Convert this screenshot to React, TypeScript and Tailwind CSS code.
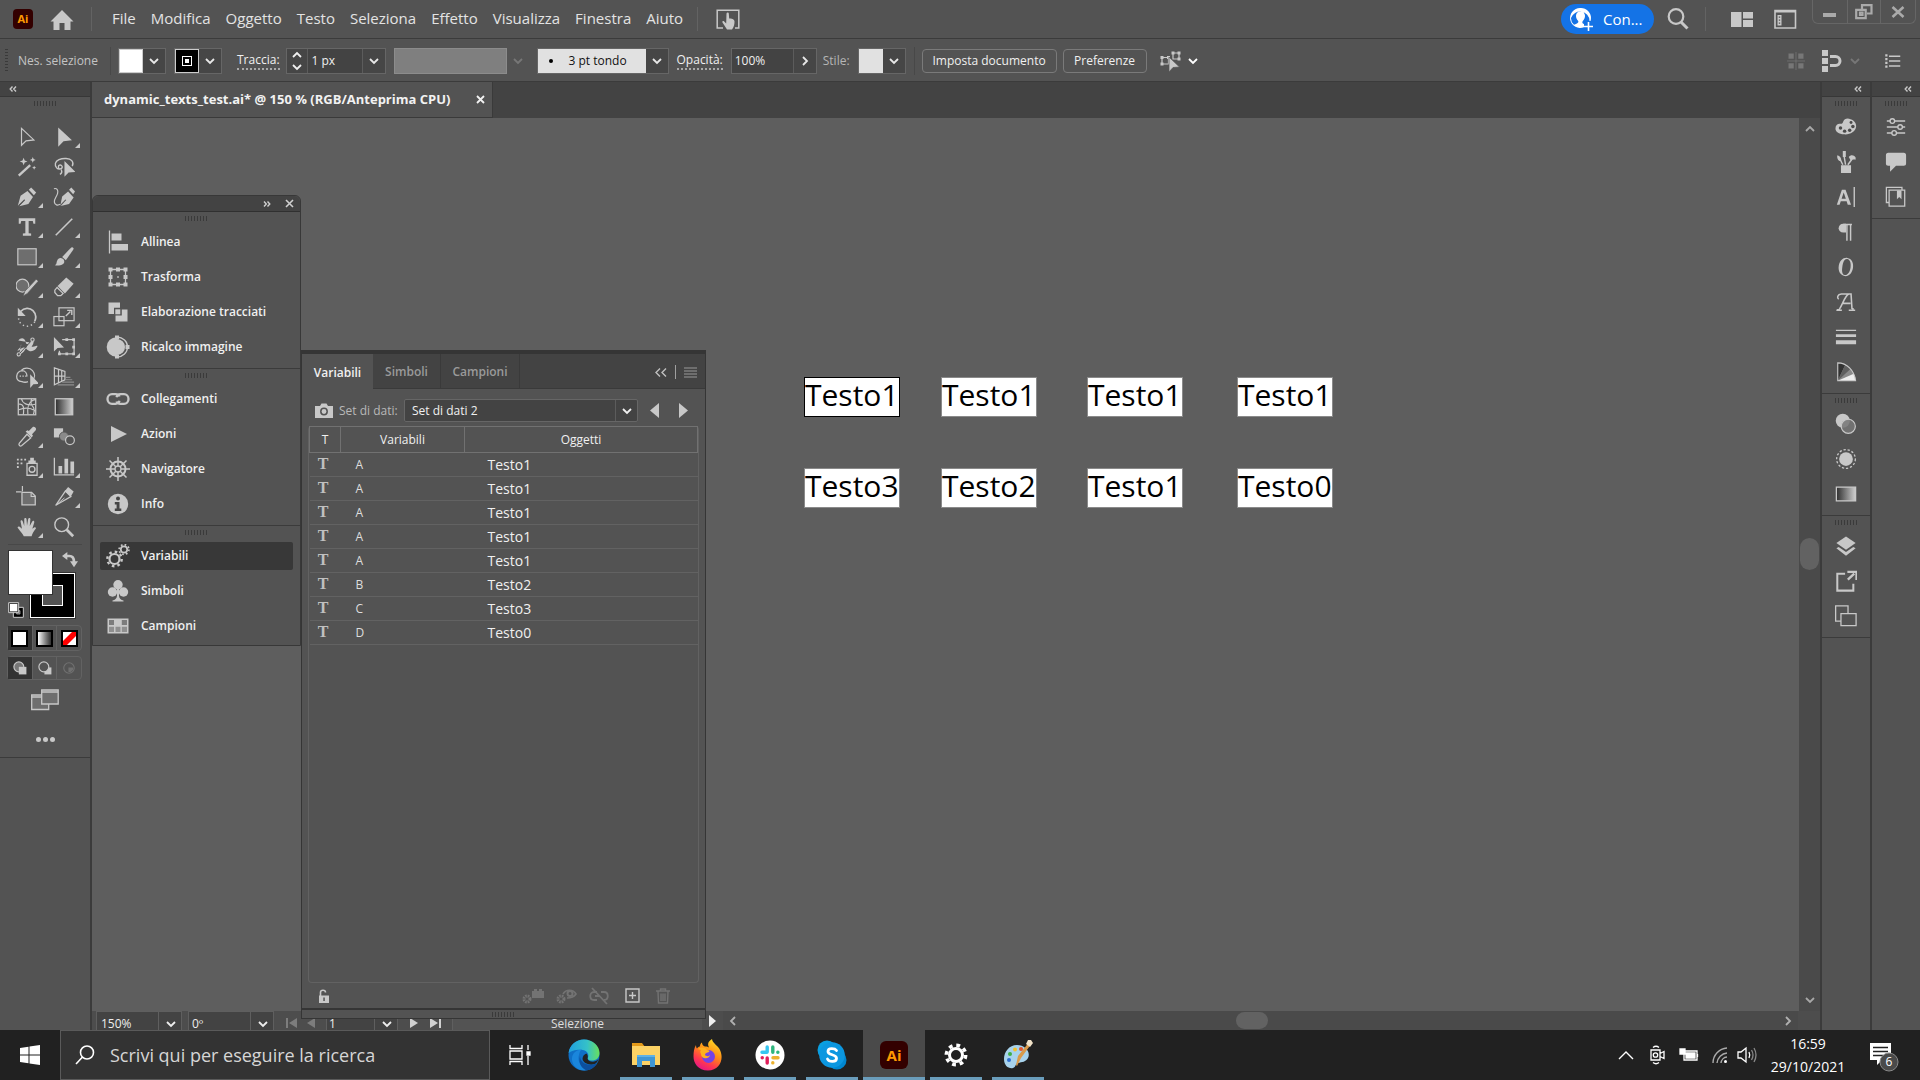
import React, { useState } from "react";
import clsx from "clsx";

interface IconProps {
  size?: number;
  children: React.ReactNode;
}

interface Tool {
  name: string;
  flyout?: boolean;
  icon: React.ReactNode;
}

interface PanelItem {
  name: string;
  icon: React.ReactNode;
}

// every icon is drawn on a 24 unit grid
const Icon: React.FC<IconProps> = ({ size = 24, children }) => (
  <svg
    width={size}
    height={size}
    viewBox="0 0 24 24"
    fill="none"
    className="shrink-0"
    aria-hidden="true"
  >
    {children}
  </svg>
);

const c = "currentColor";

const Chevron: React.FC<{ dir?: "down" | "right" | "up" | "left" }> = ({
  dir = "down",
}) => {
  const paths = {
    down: "M2 4l4 4 4-4",
    up: "M2 8l4-4 4 4",
    right: "M4 2l4 4-4 4",
    left: "M8 2L4 6l4 4",
  };
  return (
    <svg width="12" height="12" viewBox="0 0 12 12" className="shrink-0" aria-hidden="true">
      <path d={paths[dir]} fill="none" stroke={c} strokeWidth="1.8" />
    </svg>
  );
};

const DoubleArrow: React.FC<{ right?: boolean }> = ({ right }) => (
  <svg width="8" height="6" viewBox="0 0 8 6" aria-hidden="true">
    <path
      d={right ? "M1 .5L3.300 3 1 5.500M4.500.5L6.800 3 4.500 5.500" : "M3.500.5L1.200 3l2.300 2.500M7 .5L4.700 3 7 5.500"}
      fill="none"
      stroke={c}
      strokeWidth="1.4"
    />
  </svg>
);

const Grip: React.FC = () => (
  <div className="mx-auto h-[5px] w-[23px] bg-[repeating-linear-gradient(90deg,#3a3a3a_0_1px,transparent_1px_3px)]" />
);

const tools: Tool[] = [
  {
    name: "Selezione",
    icon: <path d="M6 2.500v18.500l5-4.800 8.500-1z" stroke={c} strokeWidth="1.3" />,
  },
  {
    name: "Selezione diretta",
    flyout: true,
    icon: <path d="M5.700 1.500v21l5.800-5.800 9.200-1.200z" fill={c} />,
  },
  {
    name: "Bacchetta magica",
    icon: (
      <>
        <path d="M3 21.500L15.500 10" stroke={c} strokeWidth="2.600" />
        <path
          d="M8.300 2l1.200 2.800L12.500 6l-3 1.200L8.300 10 7.100 7.200 4 6l3.100-1.200zM18.300 1.200l.9 2.200 2.300.9-2.300.9-.9 2.200-.9-2.200-2.200-.9 2.200-.9zM19.800 10.500l.7 1.500 1.500.7-1.500.7-.7 1.500-.7-1.500-1.500-.7 1.500-.7z"
          fill={c}
        />
      </>
    ),
  },
  {
    name: "Lazo",
    icon: (
      <>
        <path
          d="M4 13C1.500 10 2 6 6.500 4S18 2.200 20.500 5c1.800 2 1.500 4 .5 6M4 13c2 1.800 5.500 1.500 6-.5S8.500 9.500 7 10s-1.500 3.500 0 4M9 15c1 2 .5 4-1.500 5"
          stroke={c}
          strokeWidth="1.500"
        />
        <path d="M12.500 5.500v17l4.500-4.500 7.500-.5z" fill={c} />
      </>
    ),
  },
  {
    name: "Penna",
    flyout: true,
    icon: (
      <>
        <path d="M2 21.500L5 10.500 12.500 5.500l6 6.500-5 7.500-10 2.500 6-6.500" fill={c} />
        <path d="M3 21.500l6.500-6.500" stroke="#535353" strokeWidth="1.200" />
        <path d="M14 4l2.500-2.500 5.500 5.500-2.500 3z" fill={c} />
      </>
    ),
  },
  {
    name: "Curvatura",
    icon: (
      <>
        <path d="M8 21.500l2-10 6.500-5.500 6 6.500-5 7-8 2" fill={c} />
        <path d="M8 21.500l6-6.500" stroke="#535353" strokeWidth="1.200" />
        <path d="M17.500 4L20 1.500l4 4.500-2 3z" fill={c} />
        <path d="M1 3c3-1 5 1 4 5s-4 6-3.500 9.500S5 21.500 8 20" stroke={c} strokeWidth="1.300" />
      </>
    ),
  },
  {
    name: "Testo",
    flyout: true,
    icon: (
      <path
        d="M3 2.500h18v6h-2l-.7-3h-4.500v13.200l2.700.5v2.300h-9v-2.300l2.700-.5V5.500H5.700L5 8.500H3z"
        fill={c}
      />
    ),
  },
  {
    name: "Segmento di linea",
    flyout: true,
    icon: <path d="M3 21L21 3" stroke={c} strokeWidth="1.800" />,
  },
  {
    name: "Rettangolo",
    flyout: true,
    icon: <rect x="2" y="3" width="20" height="17.500" fill="#6e6e6e" stroke={c} strokeWidth="1.300" />,
  },
  {
    name: "Pennello",
    flyout: true,
    icon: (
      <>
        <path d="M21.500 1.500c1.500.5 1 2-.2 3.700L14 15.500l-4-3.500 8.500-9c1-1 2-1.800 3-1.500z" fill={c} />
        <path d="M8.500 13.200c2.500.3 4 2 3.800 4.300-.3 3-5 4.500-10.300 3.500 2.500-1.300 1.500-3 2.500-5 .8-1.800 2.300-3 4-2.800z" fill={c} />
      </>
    ),
  },
  {
    name: "Shaper",
    flyout: true,
    icon: (
      <>
        <circle cx="7" cy="10.500" r="7" fill="#6e6e6e" stroke={c} strokeWidth="1.400" />
        <path d="M22 3.500l2.500 2-12 13.500-4.800 3 2-5.500z" fill={c} stroke="#535353" strokeWidth=".8" />
      </>
    ),
  },
  {
    name: "Gomma",
    flyout: true,
    icon: (
      <>
        <path d="M14.500 1.500l8 7L13 19l-8-8z" fill={c} />
        <path d="M4.500 12.500l6.500 6.500-2.500 2.500H5l-3-3.500v-2.500z" stroke={c} strokeWidth="1.400" />
      </>
    ),
  },
  {
    name: "Ruota",
    flyout: true,
    icon: (
      <>
        <path d="M5 6c4-4.500 10-4.500 13.500-1 3 3 4 7 2 11.500" stroke={c} strokeWidth="1.900" />
        <path d="M2 2v9h8.500z" fill={c} />
        <path d="M20.500 17c-3 5-9 6.500-13.500 3.500-3-2-4-4.500-4.200-7" stroke={c} strokeWidth="1.600" strokeDasharray="1.500 3" />
      </>
    ),
  },
  {
    name: "Scala",
    flyout: true,
    icon: (
      <>
        <rect x="6.500" y="2" width="16.500" height="14" stroke={c} strokeWidth="1.300" />
        <rect x="1" y="11.500" width="11" height="10" stroke={c} strokeWidth="1.300" />
        <path d="M14 11l5-5M15.500 4.800h5v5" stroke={c} strokeWidth="1.500" />
      </>
    ),
  },
  {
    name: "Larghezza",
    flyout: true,
    icon: (
      <>
        <path
          d="M2.500 5c3-4 7-3 8 1.500.5 3 2 3 5 .5M3.500 20C6 20 9 17 11 13s4.500-8 7-8.500c2 0 1.500 4-1 7 3 1 5-1.500 6.500-.5-1.500 4-6 7-9.500 5-3-1.800-3.500-4-6-3.500-3 1-3.500 3-6.500 3.500C3 13 6.500 12 5.500 9z"
          fill={c}
        />
        <circle cx="3" cy="20" r="1.800" fill="#535353" stroke={c} strokeWidth="1.200" />
        <path d="M4 19L17 5" stroke="#535353" strokeWidth="1" />
        <circle cx="18" cy="4" r="1.800" fill="#535353" stroke={c} strokeWidth="1.200" />
      </>
    ),
  },
  {
    name: "Trasformazione libera",
    flyout: true,
    icon: (
      <>
        <path d="M10 4h13v15.500H7V16" stroke={c} strokeWidth="1.400" />
        <path d="M21 2.500h3v3h-3zM21 10.500h3v3h-3zM21 18h3v3h-3zM13.500 18h3v3h-3zM5.500 18h3v3h-3zM13.500 2.500h3v3h-3z" fill={c} />
        <path d="M1 1v16l4-4 7-.5z" fill={c} />
      </>
    ),
  },
  {
    name: "Crea forme",
    flyout: true,
    icon: (
      <>
        <path
          d="M6 4.500C9 1.500 15 1.500 18 5s3 8-.5 11M13 17c-2 1-4 1-6.500 0C2 17 .5 14 .8 11S3 5.500 6.500 5c3.500 0 5.500 3 5.500 6.500"
          stroke={c}
          strokeWidth="1.400"
        />
        <path d="M4 11h9" stroke={c} strokeWidth="1.500" strokeDasharray="1.500 1.500" />
        <path d="M15.500 9v15l3.500-4 6.500-.5z" fill={c} />
      </>
    ),
  },
  {
    name: "Griglia prospettica",
    flyout: true,
    icon: (
      <>
        <path d="M1.500 2v18.500L13 15V6zM1.500 11H13M6 3.500V18M9.500 5v11.500" stroke={c} strokeWidth="1.300" />
        <path d="M14 12.500h5M14 15h7M10 17.500h13M5 20.500h18" stroke="#8d8d8d" strokeWidth="1.300" />
      </>
    ),
  },
  {
    name: "Trama",
    icon: (
      <>
        <rect x="2.500" y="3" width="19" height="17.500" stroke={c} strokeWidth="1.400" />
        <path
          d="M3 9c5-1 6 3 5 11.500M6 3c1 5 6 8 15 6M21 4c-6 1-9 7-8 16M3 15c5-2 11-3 18 1M17 3c-1 3-1 6 1 8s2 6 1 9"
          stroke={c}
          strokeWidth="1.300"
        />
      </>
    ),
  },
  {
    name: "Sfumatura",
    icon: (
      <>
        <defs>
          <linearGradient id="toolGradient">
            <stop offset="0" stopColor="#2d2d2d" />
            <stop offset="1" stopColor="#d0d0d0" />
          </linearGradient>
        </defs>
        <rect x="2.500" y="3" width="19" height="17.500" fill="url(#toolGradient)" stroke={c} strokeWidth="1.400" />
      </>
    ),
  },
  {
    name: "Contagocce",
    flyout: true,
    icon: (
      <>
        <path d="M12 9l4 4L6 21.500c-1.500 1-3.500-.5-2.500-2.500z" stroke={c} strokeWidth="1.400" />
        <path d="M10.500 6l2-1.500 1.500 1 4-4.200c2-1.500 5 1.200 3.500 3.200l-4 4.500 1 1.500-1.500 2z" fill={c} />
      </>
    ),
  },
  {
    name: "Fusione",
    icon: (
      <>
        <path d="M1 2.500h10v10H1z" fill={c} />
        <circle cx="12" cy="11.500" r="5" fill="#8a8a8a" stroke="#535353" />
        <circle cx="18.500" cy="15.500" r="4.800" fill="#535353" stroke={c} strokeWidth="1.300" />
      </>
    ),
  },
  {
    name: "Bomboletta simboli",
    flyout: true,
    icon: (
      <>
        <path d="M12 8h11v13H12z" stroke={c} strokeWidth="1.400" />
        <path d="M13.500 5h8v3h-8zM15.500 2h4v3h-4z" fill={c} />
        <circle cx="17.500" cy="14.500" r="3.200" stroke={c} strokeWidth="1.500" />
        <path d="M1 3h2v2H1zM5 3h2v2H5zM9 3h2v2H9zM1 7h2v2H1zM5 7h2v2H5zM1 11h2v2H1z" fill={c} />
      </>
    ),
  },
  {
    name: "Grafico",
    flyout: true,
    icon: (
      <>
        <path d="M1.500 2v18.500H23" stroke={c} strokeWidth="1.400" />
        <path d="M6 11h4v8H6zM12.500 3h4v16h-4zM19 6h4v13h-4z" fill={c} />
      </>
    ),
  },
  {
    name: "Tavola da disegno",
    icon: (
      <>
        <path d="M0 6.500h6M7 0v6" stroke={c} strokeWidth="1.300" />
        <path d="M6.500 7H17l4 4v9.500H6.500z" fill="#6e6e6e" stroke={c} strokeWidth="1.400" />
        <path d="M16.500 7v4.500H21" stroke={c} strokeWidth="1.200" />
      </>
    ),
  },
  {
    name: "Taglierina",
    flyout: true,
    icon: (
      <>
        <path d="M3 21L13.500 5.500l6 6z" stroke={c} strokeWidth="1.400" />
        <path d="M13 5.500L16.500 1l6 5-3 5.500z" fill={c} />
        <path d="M3 21l9.500-8" stroke={c} />
      </>
    ),
  },
  {
    name: "Mano",
    flyout: true,
    icon: (
      <path
        d="M8.500 22C7 19 5 17 2 13c-.8-1.200.8-2.300 2-1.200L6.500 14 5 6c-.2-1.600 1.800-2 2.300-.4L9 11V3.500c0-1.700 2.300-1.700 2.500 0l.5 7 1.300-7.200c.3-1.500 2.500-1.300 2.400.3L15 11l2.700-5c.8-1.400 2.600-.6 2.200 1L17.800 14l2-1.500c1.300-.8 2.600.3 1.700 1.500C19 17 18 19.500 17 22z"
        fill={c}
      />
    ),
  },
  {
    name: "Zoom",
    icon: (
      <>
        <circle cx="9.500" cy="9.500" r="7.500" stroke={c} strokeWidth="1.500" />
        <path d="M15 15l7 7" stroke={c} strokeWidth="3" />
      </>
    ),
  },
];

const panelGroups: PanelItem[][] = [
  [
    {
      name: "Allinea",
      icon: (
        <>
          <path d="M3.500.5v23" stroke={c} strokeWidth="1.300" />
          <path d="M5.500 3.500h10v7h-10zM5.500 14h16.500v6.500H5.500z" fill={c} />
        </>
      ),
    },
    {
      name: "Trasforma",
      icon: (
        <>
          <path d="M4.500 4.500h15v15h-15z" stroke={c} strokeWidth="1.300" />
          <path
            d="M2.500 2.500h4v4h-4zM10 2.500h4v4h-4zM17.500 2.500h4v4h-4zM2.500 10h4v4h-4zM17.500 10h4v4h-4zM2.500 17.500h4v4h-4zM10 17.500h4v4h-4zM17.500 17.500h4v4h-4zM11.200 11.200h1.600v1.600h-1.600z"
            fill={c}
          />
        </>
      ),
    },
    {
      name: "Elaborazione tracciati",
      icon: (
        <>
          <path d="M2.500 2.500H14v5.300H8V14H2.500z" fill={c} />
          <path d="M15.800 9.500H21.500V21.500H9.500v-6h6.300z" fill={c} />
          <path d="M9.300 9.300h5v5h-5z" fill={c} />
        </>
      ),
    },
    {
      name: "Ricalco immagine",
      icon: (
        <>
          <circle cx="10.500" cy="12" r="9.800" fill={c} />
          <path d="M11 2c6 .3 10 4.500 10 10s-4 9.700-10 10" stroke="#535353" strokeWidth="4" />
          <path d="M11 2c6 .3 10.500 4.500 10.500 10S17 21.700 11 22" stroke={c} strokeWidth="1.300" />
          <path d="M9 .5h4v4H9zM9 19.500h4v4H9zM19.500 10h4v4h-4z" fill={c} />
          <circle cx="10.500" cy="12" r="7.500" fill={c} />
        </>
      ),
    },
  ],
  [
    {
      name: "Collegamenti",
      icon: (
        <path
          d="M13.500 9.500c-.5-1.500-2-2.300-4-2.300H6C3.500 7.200 1.500 9 1.500 12s2 4.800 4.500 4.800h3.500c2 0 3.500-1.300 4-3M10.500 14.500c.5 1.500 2 2.300 4 2.300H18c2.500 0 4.500-1.800 4.500-4.800S20.500 7.200 18 7.200h-3.500c-2 0-3.500 1.300-4 3"
          stroke={c}
          strokeWidth="2.300"
        />
      ),
    },
    { name: "Azioni", icon: <path d="M5 4l16 8-16 8z" fill={c} /> },
    {
      name: "Navigatore",
      icon: (
        <>
          <circle cx="12" cy="12" r="7.500" stroke={c} strokeWidth="2" />
          <circle cx="12" cy="12" r="3" stroke={c} strokeWidth="1.300" />
          <path
            d="M12 0v9M12 15v9M0 12h9M15 12h9M3.500 3.500l6.300 6.300M14.200 14.200l6.300 6.300M20.500 3.500l-6.300 6.300M9.800 14.200l-6.300 6.300"
            stroke={c}
            strokeWidth="1.500"
          />
        </>
      ),
    },
    {
      name: "Info",
      icon: (
        <>
          <circle cx="12" cy="12" r="10.200" fill={c} />
          <circle cx="12" cy="6.500" r="2" fill="#454545" />
          <path d="M8.800 10h4.700v6.500h1.800V19H8.800v-2.500h1.800v-4H8.800z" fill="#454545" />
        </>
      ),
    },
  ],
  [
    {
      name: "Variabili",
      icon: (
        <>
          <circle cx="8.500" cy="15" r="5" stroke={c} strokeWidth="2.200" />
          <circle cx="8.500" cy="15" r="7.200" stroke={c} strokeWidth="2.400" strokeDasharray="2.600 3.050" />
          <circle cx="18" cy="5.500" r="3.200" stroke={c} strokeWidth="1.700" />
          <circle cx="18" cy="5.500" r="4.900" stroke={c} strokeWidth="1.700" strokeDasharray="1.700 2.150" />
        </>
      ),
    },
    {
      name: "Simboli",
      icon: (
        <>
          <circle cx="12" cy="5.800" r="4.700" fill={c} />
          <circle cx="6.500" cy="13" r="4.700" fill={c} />
          <circle cx="17.500" cy="13" r="4.700" fill={c} />
          <path d="M11 9h2v8c.3 2.800 2 3.800 4.500 4.500v1h-11v-1C9 20.800 10.700 19.800 11 17z" fill={c} />
        </>
      ),
    },
    {
      name: "Campioni",
      icon: (
        <>
          <path d="M1.500 4.500h21v15h-21z" fill={c} />
          <path d="M3 6h5v5H3zM15.800 6H21v5h-5.200z" fill="#7c7c7c" />
          <path d="M3 12.800h5V18H3zM9.500 12.800h5V18h-5zM15.800 12.800H21V18h-5.200z" fill="#8f8f8f" />
        </>
      ),
    },
  ],
];

const dockGroups: PanelItem[][] = [
  [
    {
      name: "Colore",
      icon: (
        <>
          <path
            d="M9 6c1-3 4.500-4 8-2.500 4.500 1.500 6.500 5 6 8.500-.8 5-6.500 8.500-13 8C4 19.500.5 17 .5 13.500c0-3.500 2.500-5.500 5.500-5 1.500.3 2.500-.5 3-2.500z"
            fill={c}
          />
          <g fill="#4a4a4a">
            <circle cx="6" cy="13" r="1.900" />
            <circle cx="10.500" cy="16.500" r="1.900" />
            <circle cx="16" cy="15.500" r="1.900" />
            <circle cx="19.500" cy="11.500" r="1.900" />
            <circle cx="17.500" cy="7" r="1.600" />
          </g>
        </>
      ),
    },
    {
      name: "Pennelli",
      icon: (
        <>
          <path d="M6.500 15.500h11V24h-11z" fill={c} />
          <path d="M8.500 15L5.500 9M11.500 15L10 6M14 15l4.500-6" stroke={c} strokeWidth="1.600" />
          <path d="M2.500 4.500c3 .5 4.500 3 4.300 6l-2 .5c-2-1.500-2.800-4-2.300-6.500zM8.500 0h3.300v6.500H8.500zM15 6.500c2-2.500 5.500-2.500 7.500.5v2.500c-2-.5-4 .5-5.500.5z" fill={c} />
        </>
      ),
    },
    {
      name: "Carattere",
      icon: (
        <>
          <path d="M7.500 4h4l6 16.500h-3.600l-1.200-3.800H6.300L5 20.500H2zM7.200 14h4.600L9.500 7.200z" fill={c} />
          <path d="M21 1v22" stroke={c} strokeWidth="1.500" />
        </>
      ),
    },
    {
      name: "Paragrafo",
      icon: (
        <>
          <path d="M12 3v9.500H9C6 12.500 4 10.500 4 7.800 4 5 6 3 9 3z" fill={c} />
          <path d="M9 3.700h9.500M13 4v17.500M17 4v17.500" stroke={c} strokeWidth="1.600" />
        </>
      ),
    },
    {
      name: "OpenType",
      icon: (
        <g transform="rotate(9 12 12)">
          <path d="M12 2c4.500 0 7.700 4 7.700 10S16.500 22 12 22 4 18 4 12 7.500 2 12 2zM12 3.200C9 3.200 8 7 8 12s1 8.800 4 8.800 5-3.800 5-8.800-2-8.800-5-8.800z" fill={c} fillRule="evenodd" />
        </g>
      ),
    },
    {
      name: "Stili di carattere",
      icon: (
        <path
          d="M4 9C2 7.500 2.500 3.500 7 3.200h10.500L18.500 19l2 .8M18 3.200h-3C11 5 9 13 5 19.500c-1 1.200-2 1.300-3 .8M8 13.500h9M1.500 21h6M15 21h7"
          stroke={c}
          strokeWidth="1.700"
        />
      ),
    },
    {
      name: "Traccia",
      icon: <path d="M1 4h22v1.500H1zM1 9h22v3H1zM1 15.500h22V20H1z" fill={c} />,
    },
    {
      name: "Guida colori",
      icon: (
        <>
          <path d="M3 21.500V2c10 0 18 8 19.500 19.500z" fill="#8a8a8a" />
          <path d="M3 21.500L3 2c3.500.3 6 1.200 8 2.500z" fill="#333" />
          <path d="M3 21.500l8-17c2 1 4 2.500 5.500 4.500z" fill="#5f5f5f" />
          <path d="M3 21.500L20.500 14c1 2 1.800 4.500 2 7.500z" fill="#eee" />
          <path d="M3 21.500V2c10 0 18 8 19.500 19.500z" stroke={c} strokeWidth="1.200" />
        </>
      ),
    },
  ],
  [
    {
      name: "Trasparenza",
      icon: (
        <>
          <circle cx="8.500" cy="8.500" r="7.700" fill={c} />
          <circle cx="14.500" cy="14.500" r="7.700" fill="#777" fillOpacity=".85" stroke={c} strokeWidth="1.300" />
        </>
      ),
    },
    {
      name: "Aspetto",
      icon: (
        <>
          <circle cx="12" cy="12" r="7.500" fill={c} />
          <circle cx="12" cy="12" r="10.200" stroke={c} strokeWidth="1.400" strokeDasharray="2.500 2" />
        </>
      ),
    },
    {
      name: "Sfumatura",
      icon: <rect x="1.500" y="4.500" width="21" height="15" fill="url(#toolGradient)" stroke={c} strokeWidth="1.400" />,
    },
  ],
  [
    {
      name: "Livelli",
      icon: (
        <>
          <path d="M12 1.500l10.500 7.300L12 16 1.500 8.800z" fill={c} />
          <path d="M1.500 14.500L4 13l8 5.500 8-5.500 2.500 1.500L12 22.500z" fill={c} />
        </>
      ),
    },
    {
      name: "Esporta risorse",
      icon: (
        <>
          <path d="M11 4H2.500v18.500H20V15" stroke={c} strokeWidth="2.200" />
          <path d="M14 10.500L21 4M13.500 2h10v9" stroke={c} strokeWidth="2.600" />
        </>
      ),
    },
    {
      name: "Tavole da disegno",
      icon: <path d="M6 17.500H.7V1h13.500v8.500M6.500 9.500h16.500V22.500H6.500z" stroke={c} strokeWidth="1.400" />,
    },
  ],
];

const sideDock: PanelItem[] = [
  {
    name: "Proprietà",
    icon: (
      <>
        <path d="M2 5.500h20M2 12h20M2 18.500h20" stroke={c} strokeWidth="1.500" />
        <g fill="#535353" stroke={c} strokeWidth="1.500">
          <circle cx="8" cy="5.500" r="2.500" />
          <circle cx="16.500" cy="12" r="2.500" />
          <circle cx="10" cy="18.500" r="2.500" />
        </g>
      </>
    ),
  },
  {
    name: "Commenti",
    icon: <path d="M3.500 2h17c1.500 0 2.500 1 2.500 2.500v9c0 1.500-1 2.500-2.500 2.500H12l-6.500 6.500V16h-2C2 16 1 15 1 13.500v-9C1 3 2 2 3.500 2z" fill={c} />,
  },
  {
    name: "Librerie",
    icon: (
      <>
        <path d="M4 18H1.500V1.500h17V4M4.500 4.500h17V22h-17z" stroke={c} strokeWidth="1.400" />
        <path d="M13 5h5v9.500l-2.500-2.500-2.500 2.500z" fill={c} />
      </>
    ),
  },
];

const rows = [
  { variable: "A", object: "Testo1" },
  { variable: "A", object: "Testo1" },
  { variable: "A", object: "Testo1" },
  { variable: "A", object: "Testo1" },
  { variable: "A", object: "Testo1" },
  { variable: "B", object: "Testo2" },
  { variable: "C", object: "Testo3" },
  { variable: "D", object: "Testo0" },
];

const artboards = [
  { text: "Testo1", place: "left-[712px] top-[259px]", active: true },
  { text: "Testo1", place: "left-[849px] top-[259px]" },
  { text: "Testo1", place: "left-[995px] top-[259px]" },
  { text: "Testo1", place: "left-[1145px] top-[259px]" },
  { text: "Testo3", place: "left-[712px] top-[350px]" },
  { text: "Testo2", place: "left-[849px] top-[350px]" },
  { text: "Testo1", place: "left-[995px] top-[350px]" },
  { text: "Testo0", place: "left-[1145px] top-[350px]" },
];

const MenuBar: React.FC = () => {
  const menus = [
    "File",
    "Modifica",
    "Oggetto",
    "Testo",
    "Seleziona",
    "Effetto",
    "Visualizza",
    "Finestra",
    "Aiuto",
  ];
  return (
    <header className="flex h-[39px] shrink-0 items-center border-b border-[#3b3b3b] text-[#c8c8c8]">
      <div className="ml-[13px] flex h-5 w-5 items-center justify-center rounded-sm bg-[#330000] text-[11px] font-bold text-[#ff9a00]">
        Ai
      </div>
      <button aria-label="Home" className="ml-[17px] pt-0.5">
        <Icon>
          <path d="M12 2L.5 13.500h3V22h6v-7h5v7h6v-8.500h3z" fill={c} />
        </Icon>
      </button>
      <div className="ml-[17px] h-6 w-px bg-[#636363]" />
      <nav className="ml-5 flex gap-[15px] pb-0.5 text-[15px] text-[#e3e3e3]">
        {menus.map((menu) => (
          <button key={menu} className="leading-5">
            {menu}
          </button>
        ))}
      </nav>
      <div className="ml-3.5 h-6 w-px bg-[#636363]" />
      <button aria-label="Controlli touch" className="ml-[18px] pt-0.5">
        <Icon>
          <path d="M7 20H1.200V2.200h21.600V20H19" stroke={c} strokeWidth="1.500" />
          <path
            d="M10.500 5.500c.3-1.500 2.200-1.300 2.300 0l.4 5c2 0 5.300.5 5.300 3 0 3-.5 5-2.500 8h-5L6.500 14.500c-.6-1.400.8-2 1.700-1l2 2z"
            fill={c}
          />
        </Icon>
      </button>
      <div className="ml-auto flex h-full items-center">
        <button className="flex h-[30px] w-[93px] items-center rounded-full bg-[#1473e6] pl-2 text-[15px] text-white">
          <Icon>
            <path d="M11 1a10 10 0 1 0 4 19.200V17c-2-.8-2-1.700-1-3.200 1.500-1.800 2-3 2-5C16 6 14 4.500 11.500 4.500S7 6 7 8.800c0 2 .5 3.200 2 5 1 1.500 0 2.500-4 4A8.800 8.800 0 0 1 2 11 9.500 9.500 0 0 1 20.500 14h1A10 10 0 0 0 11 1z" fill="white" />
            <path d="M19.500 15v9M15 19.500h9" stroke="white" strokeWidth="1.600" />
          </Icon>
          <span className="ml-2.5">Con...</span>
        </button>
        <button aria-label="Cerca" className="ml-3">
          <Icon>
            <circle cx="10" cy="9.500" r="7.300" stroke={c} strokeWidth="2.200" />
            <path d="M15 15l6.500 6.500" stroke={c} strokeWidth="3" />
          </Icon>
        </button>
        <div className="ml-[15px] h-6 w-px bg-[#636363]" />
        <button aria-label="Disponi documenti" className="ml-6">
          <Icon>
            <path d="M1 5h10.500v15H1zM13 5h10v6.500H13zM13 13h10v7H13z" fill={c} />
          </Icon>
        </button>
        <button aria-label="Area di lavoro" className="ml-[19px]">
          <Icon>
            <path d="M2 3.500h20.500V21H2z" stroke={c} strokeWidth="1.600" />
            <path d="M2 3h20.500v2.500H2zM4.500 8h4v10.500h-4z" fill={c} />
            <path d="M5.800 9.500h1.400v1.200H5.800zM5.800 12.500h1.400v1.200H5.800zM5.800 15.500h1.400v1.200H5.800z" fill="#535353" />
          </Icon>
        </button>
        <div className="mr-1 ml-[15px] flex self-start rounded-b-md border border-t-0 border-[#666] text-[#aaa]">
          <button aria-label="Riduci" className="flex h-[23px] w-[34px] items-center justify-center">
            <svg width="14" height="14" viewBox="0 0 14 14"><path d="M0 8h13v4H0z" fill={c} /></svg>
          </button>
          <button
            aria-label="Ripristina"
            className="flex h-[23px] w-[34px] items-center justify-center border-x border-[#666]"
          >
            <svg width="18" height="16" viewBox="0 0 18 16" fill="none">
              <path d="M7 5V1.200h9.500v8.300H12M1.200 5.800h9.500v8.400H1.200zM5 8.500h2.500v2.500H5z" stroke={c} strokeWidth="2.200" />
            </svg>
          </button>
          <button aria-label="Chiudi" className="flex h-[23px] w-[34px] items-center justify-center">
            <svg width="14" height="12" viewBox="0 0 14 12"><path d="M1.500 1l11 10M12.500 1l-11 10" stroke={c} strokeWidth="2.600" /></svg>
          </button>
        </div>
      </div>
    </header>
  );
};

const DropButton: React.FC<{ label: string; muted?: boolean; dir?: "down" | "right" }> = ({
  label,
  muted,
  dir,
}) => (
  <button
    aria-label={label}
    className={clsx(
      "flex w-[22px] items-center justify-center self-stretch",
      muted ? "text-[#777]" : "bg-[#464646] text-[#e8e8e8]"
    )}
  >
    <Chevron dir={dir} />
  </button>
);

const ControlBar: React.FC = () => (
  <div className="flex h-[43px] shrink-0 items-center border-b border-[#3b3b3b] pt-0.5 text-[12px] text-[#f0f0f0]">
    <div className="ml-[5px] h-6 w-[3px] bg-[repeating-linear-gradient(180deg,#3a3a3a_0_1px,transparent_1px_3px)]" />
    <span className="ml-2.5 w-[92px] text-[#c4c4c4]">Nes. selezione</span>
    <div className="h-7 w-px bg-[#484848]" />
    <div className="ml-[7px] flex h-[26px] border border-[#666]">
      <button aria-label="Riempimento" className="w-6 border border-[#ccc] bg-white" />
      <DropButton label="Opzioni riempimento" />
    </div>
    <div className="ml-2 flex h-[26px] border border-[#666]">
      <button aria-label="Colore traccia" className="flex w-6 items-center justify-center border border-[#ccc] bg-black">
        <span className="flex h-2.5 w-2.5 items-center justify-center border border-white">
          <span className="h-1 w-1 bg-white" />
        </span>
      </button>
      <DropButton label="Opzioni traccia" />
    </div>
    <label htmlFor="stroke" className="ml-[15px] border-b-2 border-dotted border-[#aaa] leading-4">
      Traccia:
    </label>
    <div className="ml-1.5 flex h-[26px] items-stretch border border-[#666] bg-[#464646]">
      <div className="flex w-5 flex-col items-center justify-center">
        <button aria-label="Aumenta"><Chevron dir="up" /></button>
        <button aria-label="Riduci spessore"><Chevron /></button>
      </div>
      <input id="stroke" defaultValue="1 px" className="w-[56px] border-x border-[#5c5c5c] bg-[#434343] px-1" />
      <DropButton label="Spessori" />
    </div>
    <div className="ml-2 flex h-[26px]">
      <div className="w-[113px] border border-[#8c8c8c] bg-[#7f7f7f]" />
      <DropButton label="Profilo larghezza" muted />
    </div>
    <div className="ml-2 flex h-[26px] border border-[#666]">
      <div className="flex w-[108px] items-center gap-4 bg-[#e1e1e1] pl-[11px] text-[#111]">
        <span className="h-1 w-1 rounded-full bg-black" />
        <span>3 pt tondo</span>
      </div>
      <DropButton label="Definizione pennello" />
    </div>
    <label htmlFor="opacity" className="ml-2 border-b-2 border-dotted border-[#aaa] leading-4">
      Opacità:
    </label>
    <div className="ml-2 flex h-[26px] border border-[#666]">
      <input id="opacity" defaultValue="100%" className="w-[62px] border-r border-[#5c5c5c] bg-[#434343] px-[3px]" />
      <DropButton label="Altre opacità" dir="right" />
    </div>
    <span className="ml-1.5 text-[#b5b5b5]">Stile:</span>
    <div className="ml-2 flex h-[26px] border border-[#666]">
      <button aria-label="Stile" className="w-6 bg-[#e1e1e1]" />
      <DropButton label="Stili grafica" />
    </div>
    <div className="ml-2 h-7 w-px bg-[#484848]" />
    <button className="ml-[7px] h-6 w-[135px] rounded-sm border border-[#7a7a7a]">Imposta documento</button>
    <button className="ml-1.5 h-6 w-[84px] rounded-sm border border-[#7a7a7a]">Preferenze</button>
    <button aria-label="Seleziona simili" className="ml-3 flex items-center gap-1 text-[#c8c8c8]">
      <Icon>
        <path d="M3 8.500h6.500V15H3zM14 4h6v6h-6z" stroke={c} strokeWidth="1.200" />
        <path d="M1.500 7h3v3h-3zM1.500 13.500h3v3h-3zM8 7h3v3H8zM12.500 2.500h3v3h-3zM18.500 2.500h3v3h-3zM18.500 8.500h3v3h-3z" fill={c} />
        <path d="M10 8v15l4-4.500 6.500-.5z" fill={c} stroke="#535353" strokeWidth=".7" />
      </Icon>
      <span className="text-white"><Chevron /></span>
    </button>
    <div className="mr-[19px] ml-auto flex items-center text-[#c8c8c8]">
      <span className="text-[#777]">
        <Icon size={18}>
          <path d="M2 2h7v7H2zM15 2h7v7h-7zM2 15h7v7H2zM15 15h7v7h-7z" fill={c} />
          <path d="M12 0v24M0 12h24" stroke={c} />
        </Icon>
      </span>
      <button aria-label="Aggancia" className="ml-3.5 flex items-center gap-1.5">
        <Icon>
          <path d="M3 1h6v6H3zM3 9h6v6H3zM3 17h6v6H3z" fill={c} />
          <path d="M11 7.500h5.500a4.500 4.500 0 0 1 0 9H11" stroke={c} strokeWidth="3" />
        </Icon>
        <span className="text-[#777]"><Chevron /></span>
      </button>
      <button aria-label="Opzioni pannello" className="ml-[22px]">
        <Icon size={18}>
          <path d="M3 3h3v3H3zM3 8h3v3H3zM3 13h3v3H3zM3 18h3v3H3z" fill={c} />
          <path d="M8 5.500h15M8 12h15M8 18.500h15" stroke={c} strokeWidth="2" />
        </Icon>
      </button>
    </div>
  </div>
);

const Toolbar: React.FC = () => (
  <aside className="flex w-[92px] shrink-0 flex-col border-r-2 border-[#3b3b3b] text-[#c8c8c8]">
    <div className="flex h-[15px] items-center border-b border-[#373737] bg-[#434343] pl-[9px]">
      <DoubleArrow />
    </div>
    <div className="h-[25px] pt-1">
      <Grip />
    </div>
    <div className="grid grid-cols-[37px_37px] pl-2">
      {tools.map((tool) => (
        <button
          key={tool.name}
          aria-label={tool.name}
          className="relative flex h-[30px] items-center justify-center"
        >
          <Icon size={22}>{tool.icon}</Icon>
          {tool.flyout && (
            <svg width="5" height="5" className="absolute right-0.5 bottom-1">
              <path d="M5 0v5H0z" fill={c} />
            </svg>
          )}
        </button>
      ))}
    </div>
    <div className="mx-2 mt-0.5 border-t border-[#484848]" />
    {/* fill and stroke */}
    <div className="relative mt-[5px] ml-2 h-[70px]">
      <div className="absolute top-[23px] left-[22px] flex h-[45px] w-[45px] items-center justify-center border border-white bg-black outline outline-[#333]">
        <div className="h-[21px] w-[21px] border border-white bg-[#535353]" />
      </div>
      <button aria-label="Riempimento attivo" className="absolute top-0 left-0 h-[45px] w-[45px] border border-[#333] bg-white" />
      <button aria-label="Scambia" className="absolute top-0.5 left-[54px]">
        <Icon size={16}>
          <path d="M6 6h5c5 0 7 3 7 9" stroke={c} strokeWidth="4" />
          <path d="M0 6l8-6v12zM12 14h12l-6 9z" fill={c} />
        </Icon>
      </button>
      <button aria-label="Predefiniti" className="absolute top-[52px] left-0">
        <Icon size={16}>
          <path d="M8 8h15v15H8z" fill="black" stroke="#ccc" strokeWidth="1.500" />
          <path d="M13 13h5v5h-5z" fill="#535353" stroke="#ccc" />
          <path d="M1 1h15v15H1z" fill="#333" stroke="#ccc" strokeWidth="1.500" />
          <path d="M3 3h11v11H3z" fill="white" />
        </Icon>
      </button>
    </div>
    <div className="mt-[5px] ml-[7px] flex h-[26px] w-[75px] rounded-sm border border-[#626262]">
      <button aria-label="Colore pieno" className="flex flex-1 items-center justify-center bg-[#333]">
        <span className="h-[17px] w-[17px] border-2 border-black bg-white" />
      </button>
      <button aria-label="Sfumatura colore" className="flex flex-1 items-center justify-center border-x border-[#626262]">
        <span className="h-[17px] w-[17px] border-2 border-black bg-linear-to-r from-white to-[#333]" />
      </button>
      <button aria-label="Nessuno" className="flex flex-1 items-center justify-center">
        <svg width="17" height="17">
          <path d="M0 0h17v17H0z" />
          <path d="M2 2h13v13H2z" fill="white" />
          <path d="M2 15v-4l9-9h4v4l-9 9z" fill="red" />
        </svg>
      </button>
    </div>
    <div className="mt-[5px] ml-[7px] flex h-6 w-[75px] rounded-sm border border-[#626262]">
      <button aria-label="Disegna normale" className="flex flex-1 items-center justify-center bg-[#333]">
        <Icon size={14}>
          <circle cx="10" cy="10" r="8.500" fill="#777" stroke={c} strokeWidth="2" />
          <path d="M10 10h13v13H10z" fill={c} />
        </Icon>
      </button>
      <button aria-label="Disegna dietro" className="flex flex-1 items-center justify-center border-x border-[#626262]">
        <Icon size={14}>
          <path d="M11 11h12v12H11z" fill={c} />
          <circle cx="10" cy="10" r="8.500" fill="#535353" stroke={c} strokeWidth="2" />
        </Icon>
      </button>
      <button aria-label="Disegna dentro" className="flex flex-1 items-center justify-center text-[#707070]">
        <Icon size={14}>
          <circle cx="12" cy="12" r="9" stroke={c} strokeWidth="2" />
          <path d="M11 11h8v4l-4 4h-4z" fill={c} />
        </Icon>
      </button>
    </div>
    <button aria-label="Modalità schermo" className="mx-auto mt-[9px]">
      <svg width="28" height="22" viewBox="0 0 28 22" fill="#6e6e6e" stroke={c} strokeWidth="1.300">
        <path d="M.7 6h17v14.500H.7zM.7 8h17" />
        <path d="M10.700 1h16.500v14H10.700zM10.700 3h16.500" />
      </svg>
    </button>
    <button aria-label="Modifica barra strumenti" className="mx-auto mt-4 flex h-6 items-center gap-0.5">
      <span className="h-[5px] w-[5px] rounded-full bg-[#c8c8c8]" />
      <span className="h-[5px] w-[5px] rounded-full bg-[#c8c8c8]" />
      <span className="h-[5px] w-[5px] rounded-full bg-[#c8c8c8]" />
    </button>
    <div className="mt-1.5 border-t border-[#3b3b3b]" />
  </aside>
);

const PanelList: React.FC = () => {
  const [selected, setSelected] = useState<string>("Variabili");

  return (
    <div className="absolute top-[113px] left-0 w-[209px] rounded-t-md border border-[#383838] bg-[#535353]">
      <div className="flex h-4 items-center justify-end gap-3.5 rounded-t-md border-b border-[#303030] bg-[#434343] pr-1.5 text-[#d0d0d0]">
        <button aria-label="Espandi pannelli"><DoubleArrow right /></button>
        <button aria-label="Chiudi pannelli">
          <svg width="9" height="9" viewBox="0 0 9 9"><path d="M1 1l7 7M8 1L1 8" stroke={c} strokeWidth="1.600" /></svg>
        </button>
      </div>
      {panelGroups.map((group, index) => (
        <div key={index} className="border-b border-[#3b3b3b] px-[7px] pb-1 last:border-0 last:pb-0.5">
          <div className="h-3 pt-1">
            <Grip />
          </div>
          {group.map((item) => (
            <div key={item.name} className="flex h-[35px] items-center">
              <button
                onClick={() => setSelected(item.name)}
                className={clsx(
                  "flex h-7 w-full items-center gap-[11px] rounded-xs pl-1.5 text-[12px] font-semibold text-[#f0f0f0]",
                  selected === item.name && "bg-[#383838]"
                )}
              >
                <span className="text-[#c8c8c8]"><Icon>{item.icon}</Icon></span>
                {item.name}
              </button>
            </div>
          ))}
        </div>
      ))}
    </div>
  );
};

const VariablesPanel: React.FC = () => (
  <div className="absolute top-[268px] bottom-[11px] left-[209px] flex w-[405px] flex-col border-x border-t-4 border-b border-[#353535] bg-[#535353] text-[12px] text-[#f0f0f0]">
    <div className="flex h-[35px] shrink-0 bg-[#434343] font-semibold text-[#9a9a9a]">
      <button className="w-[71px] bg-[#535353] pt-0.5 text-[#f0f0f0]">Variabili</button>
      <button className="w-[68px] border-r border-b border-[#3a3a3a] pt-0.5">Simboli</button>
      <button className="w-[79px] border-r border-b border-[#3a3a3a] pt-0.5">Campioni</button>
      <div className="flex flex-1 items-center justify-end gap-2 border-b border-[#3a3a3a] pt-0.5 pr-2 text-[#c0c0c0]">
        <button aria-label="Comprimi">
          <svg width="12" height="9" viewBox="0 0 12 9" fill="none"><path d="M5 .5l-4 4 4 4M11 .5l-4 4 4 4" stroke={c} strokeWidth="1.400" /></svg>
        </button>
        <div className="h-3.5 w-px bg-[#a0a0a0]" />
        <button aria-label="Menu del pannello">
          <svg width="13" height="11" viewBox="0 0 13 11"><path d="M0 1h13M0 4h13M0 7h13M0 10h13" stroke="#9a9a9a" strokeWidth="1.200" /></svg>
        </button>
      </div>
    </div>
    <div className="flex h-[37px] shrink-0 items-center pt-1.5 pl-[13px]">
      <span className="text-[#c8c8c8]">
        <svg width="18" height="16" viewBox="0 0 18 16">
          <path d="M0 3h5l1.500-2.500h5L13 3h5v12H0z" fill={c} />
          <circle cx="9" cy="8.500" r="3.200" fill="none" stroke="#535353" strokeWidth="1.500" />
        </svg>
      </span>
      <label htmlFor="dataset" className="ml-1.5 w-[65px] text-[#b8b8b8]">
        Set di dati:
      </label>
      <div className="relative h-[23px] w-[234px]">
        <select
          id="dataset"
          className="h-full w-full appearance-none rounded-xs border border-[#666] bg-[#434343] px-[7px]"
        >
          <option>Set di dati 2</option>
        </select>
        <span className="pointer-events-none absolute inset-y-px right-px flex w-[22px] items-center justify-center border-l border-[#5c5c5c]">
          <Chevron />
        </span>
      </div>
      <button aria-label="Set precedente" className="ml-3 text-[#c8c8c8]">
        <svg width="9" height="15"><path d="M9 0v15L0 7.500z" fill={c} /></svg>
      </button>
      <button aria-label="Set successivo" className="ml-5 text-[#c8c8c8]">
        <svg width="9" height="15"><path d="M0 0v15l9-7.500z" fill={c} /></svg>
      </button>
    </div>
    <div className="mx-1.5 flex-1 rounded-sm border border-t-0 border-[#626262]">
      <table className="w-full table-fixed border-collapse">
        <thead>
          <tr className="h-[26px]">
            <th className="w-[31px] border border-[#717171] font-normal">T</th>
            <th className="w-[124px] border border-[#717171] font-normal">Variabili</th>
            <th className="border border-[#717171] font-normal">Oggetti</th>
          </tr>
        </thead>
        <tbody>
          {rows.map((row, index) => (
            <tr key={index} className="h-6 border-b border-[#626262]">
              <td className="p-0 pr-1 pb-0.5 text-center [font-family:'Liberation_Serif',serif] text-[16px] leading-5 font-bold text-[#c0c0c0]">
                T
              </td>
              <td className="p-0 pl-[15px] leading-5 text-[#dedede]">{row.variable}</td>
              <td className="p-0 pl-[23px] text-[14px] leading-5">{row.object}</td>
            </tr>
          ))}
        </tbody>
      </table>
    </div>
    <div className="flex h-[25px] shrink-0 items-center pr-[35px] pl-4 text-[#737373]">
      <button aria-label="Blocca" className="mr-auto text-[#c8c8c8]">
        <svg width="12" height="14" viewBox="0 0 12 14">
          <path d="M2.500 7V3.500C2.500.5 7.500.5 7.500 3.500" fill="none" stroke={c} strokeWidth="1.600" />
          <path d="M1 6.500h10V14H1z" fill={c} />
          <path d="M5.300 8.500h1.500v3.500H5.300z" fill="#535353" />
        </svg>
      </button>
      <div className="flex items-center gap-3">
        <button aria-label="Rendi oggetto dinamico" disabled>
          <svg width="22" height="16" viewBox="0 0 22 16">
            <circle cx="5" cy="11" r="3" fill="none" stroke={c} strokeWidth="3" strokeDasharray="1.600 .8" />
            <path d="M10 3h2V1h3v2h2V1h3v2h2v7H10z" fill={c} />
          </svg>
        </button>
        <button aria-label="Rendi visibilità dinamica" disabled>
          <svg width="21" height="16" viewBox="0 0 21 16" fill="none">
            <circle cx="5" cy="11" r="3" stroke={c} strokeWidth="3" strokeDasharray="1.600 .8" />
            <path d="M7 6c3-5 10-5 13 0-2 3-5 4-9 4" stroke={c} strokeWidth="1.600" />
            <circle cx="14" cy="5.500" r="2.500" stroke={c} strokeWidth="2" />
          </svg>
        </button>
        <button aria-label="Scollega variabile" disabled>
          <svg width="20" height="18" viewBox="0 0 20 18" fill="none" stroke={c} strokeWidth="1.800">
            <path d="M8 5H5C0 5 0 13 5 13h3M12 5h3c5 0 5 8 0 8M6 9h4M3 1l15 16" />
          </svg>
        </button>
        <button aria-label="Nuova variabile" className="ml-1 text-[#c8c8c8]">
          <svg width="15" height="15" viewBox="0 0 15 15" fill="none" stroke={c} strokeWidth="1.400">
            <path d="M1 1h13v13H1zM7.500 4v7M4 7.500h7" />
          </svg>
        </button>
        <button aria-label="Elimina variabile" disabled className="ml-1">
          <svg width="14" height="16" viewBox="0 0 14 16" fill="none" stroke={c} strokeWidth="1.400">
            <path d="M0 3h14M4.500 3V1h5v2M2 3.500l.5 11.500h9L12 3.500M5 5.500v7.500M7 5.500v7.500M9 5.500v7.500" />
          </svg>
        </button>
      </div>
    </div>
    <div className="h-2.5 shrink-0 border-t-2 border-[#353535] pt-0.5">
      <Grip />
    </div>
  </div>
);

const StatusBar: React.FC = () => (
  <div className="flex h-[19px] shrink-0 items-start overflow-hidden bg-[#4d4d4d] text-[12px] text-[#eee]">
    <div className="relative ml-1 h-[26px] w-[86px]">
      <select aria-label="Zoom" className="h-full w-full appearance-none border border-[#5f5f5f] bg-[#434343] px-1">
        <option>150%</option>
      </select>
      <span className="pointer-events-none absolute inset-y-0 right-0 flex w-6 items-center justify-center border-l border-[#5f5f5f]">
        <Chevron />
      </span>
    </div>
    <div className="relative ml-1.5 h-[26px] w-[86px]">
      <select aria-label="Rotazione" className="h-full w-full appearance-none border border-[#5f5f5f] bg-[#434343] px-[3px]">
        <option>0º</option>
      </select>
      <span className="pointer-events-none absolute inset-y-0 right-0 flex w-6 items-center justify-center border-l border-[#5f5f5f]">
        <Chevron />
      </span>
    </div>
    <div className="flex h-6 w-[52px] items-center justify-center gap-2.5 text-[#7d7d7d]">
      <svg width="11" height="10"><path d="M0 0h2v10H0zM11 0v10L3 5z" fill={c} /></svg>
      <svg width="8" height="10"><path d="M8 0v10L0 5z" fill={c} /></svg>
    </div>
    <div className="relative h-[26px] w-[72px]">
      <select aria-label="Tavola" className="h-full w-full appearance-none border border-[#5f5f5f] bg-[#434343] px-0.5">
        <option>1</option>
      </select>
      <span className="pointer-events-none absolute inset-y-0 right-0 flex w-6 items-center justify-center border-l border-[#5f5f5f]">
        <Chevron />
      </span>
    </div>
    <div className="flex h-6 w-[54px] items-center justify-center gap-3 text-[#d0d0d0]">
      <svg width="8" height="10"><path d="M0 0v10l8-5z" fill={c} /></svg>
      <svg width="11" height="10"><path d="M9 0h2v10H9zM0 0v10l8-5z" fill={c} /></svg>
    </div>
    <div className="h-6 w-[250px] border-l border-[#5f5f5f] bg-[#535353] text-center leading-[26px] text-[#ddd]">
      Selezione
    </div>
    <button aria-label="Mostra" className="flex h-[19px] w-[21px] items-center justify-center">
      <svg width="7" height="12"><path d="M0 0v12l7-6z" fill={c} /></svg>
    </button>
    <div className="flex h-[19px] flex-1 items-center justify-between bg-[#4a4a4a] px-1 text-[#b0b0b0]">
      <Chevron dir="left" />
      <div className="mr-[18px] h-[17px] w-8 rounded-full bg-[#626262]" />
      <Chevron dir="right" />
    </div>
    <div className="w-[22px]" />
  </div>
);

const Workspace: React.FC = () => (
  <section className="relative flex min-w-0 flex-1 flex-col">
    <div className="flex h-9 shrink-0 bg-[#434343]">
      <div className="flex w-[401px] items-center border-r border-b border-[#3a3a3a] bg-[#535353] pl-3 text-[13px] font-bold text-[#f2f2f2]">
        <span>dynamic_texts_test.ai* @ 150 % (RGB/Anteprima CPU)</span>
        <button aria-label="Chiudi documento" className="mr-[7px] ml-auto">
          <svg width="9" height="9" viewBox="0 0 9 9"><path d="M1 1l7 7M8 1L1 8" stroke={c} strokeWidth="1.800" /></svg>
        </button>
      </div>
    </div>
    <div className="flex min-h-0 flex-1">
      <main className="relative min-w-0 flex-1 overflow-hidden bg-[#5e5e5e]">
        {artboards.map((board, index) => (
          <div
            key={index}
            className={clsx(
              "absolute h-10 w-24 border bg-white text-[30px] leading-[34px] whitespace-nowrap text-black",
              board.place,
              board.active ? "border-black" : "border-[#8a8a8a]"
            )}
          >
            {board.text}
          </div>
        ))}
      </main>
      <div className="flex w-[21px] shrink-0 flex-col items-center justify-between bg-[#4a4a4a] py-[5px] text-[#a8a8a8]">
        <Chevron dir="up" />
        <div className="mb-[22px] h-8 w-[19px] rounded-full bg-[#626262]" />
        <Chevron />
      </div>
    </div>
    <StatusBar />
    <PanelList />
    <VariablesPanel />
  </section>
);

const Dock: React.FC<{ groups: PanelItem[][] }> = ({ groups }) => (
  <aside className="flex w-[50px] shrink-0 flex-col border-l-2 border-[#3b3b3b] text-[#c8c8c8]">
    <div className="flex h-[15px] items-center justify-end border-b border-[#373737] bg-[#434343] pr-2">
      <DoubleArrow />
    </div>
    {groups.map((group, index) => (
      <div key={index} className="border-b border-[#3b3b3b] pb-1">
        <div className="h-3 pt-1">
          <Grip />
        </div>
        {group.map((item) => (
          <button key={item.name} aria-label={item.name} className="flex h-[35px] w-full items-center justify-center">
            <Icon size={22}>{item.icon}</Icon>
          </button>
        ))}
      </div>
    ))}
  </aside>
);

const apps = [
  {
    name: "Edge",
    icon: (
      <svg width="32" height="32" viewBox="0 0 32 32">
        <defs>
          <linearGradient id="edgeTop" x1="0" x2="1">
            <stop offset="0" stopColor="#1f9fde" />
            <stop offset=".6" stopColor="#35c1c9" />
            <stop offset="1" stopColor="#69e05c" />
          </linearGradient>
        </defs>
        <circle cx="16" cy="16" r="15.500" fill="#0f6fc6" />
        <path d="M.6 14C1.500 6 8 .5 16 .5c9 0 15.500 6.500 15.500 13.500 0 5-3.500 7.500-7.500 7.500-3 0-5-1-4-3 1-2.500 0-6.500-5-7.500C9 10 3 12 .6 14z" fill="url(#edgeTop)" />
        <path d="M11 16c-2 6 2 13 9 15-8 2-15-3-16-10-.5-6 4-10.500 10-10.500-2 1.200-2.600 3.500-3 5.500z" fill="#1a86dc" />
        <path d="M12 17c0 6 6 11 17 7.500-2 3.500-6 6.500-10 6.800-5-1.300-9-6.500-7-14.300z" fill="#0c4f9e" />
        <path d="M19.500 19.500c1 4 8 4.500 11 .5-1 3-2.500 4.500-4 5-6 1.500-11-1-12-5 0-3 2-5 4-5.500 1.500 2 1.500 3 1 5z" fill="#222" />
      </svg>
    ),
  },
  {
    name: "Esplora file",
    open: true,
    icon: (
      <svg width="30" height="28" viewBox="0 0 30 28">
        <path d="M1 2h10l3 4H1z" fill="#e39a1a" />
        <path d="M1 5h28v19H1z" fill="#fcd265" />
        <path d="M6 14h18v12h-5v-6h-8v6H6z" fill="#3f96d4" />
        <path d="M6 14h18v2H6z" fill="#5fb2e6" />
      </svg>
    ),
  },
  {
    name: "Firefox",
    open: true,
    icon: (
      <svg width="30" height="32" viewBox="0 0 30 32">
        <defs>
          <linearGradient id="fox" x1=".8" y1="0" x2=".3" y2="1">
            <stop offset="0" stopColor="#ffe226" />
            <stop offset=".45" stopColor="#ff8a16" />
            <stop offset=".75" stopColor="#ff3750" />
            <stop offset="1" stopColor="#e31587" />
          </linearGradient>
        </defs>
        <path d="M3 6c0 1.500.5 3 1 3.500 1-1.500 2-2 3-2 0-2 .5-3 2-4 0 2 1 3.500 3 4 2 0 3.500.5 4 1C14 5 15.500 2 19 0c.5 4 5 6 7.500 10 5 9 1 21-11.500 21.500C5 31.500.500 24 .5 17.500.5 13 1 9 3 6z" fill="url(#fox)" />
        <circle cx="15.500" cy="17.500" r="6.500" fill="#7542e5" />
        <path d="M5 10c3-2 7-2 9 1 2 0 3 1 2 2-2 .5-4 1-4 3 1 1 3 2 5 0-1 5-9 4-9-1-1-2-1-3 0-4z" fill="#ffb01f" />
      </svg>
    ),
  },
  {
    name: "Slack",
    open: true,
    icon: (
      <svg width="30" height="30" viewBox="0 0 30 30">
        <circle cx="15" cy="15" r="14.500" fill="white" />
        <g strokeWidth="3.400" strokeLinecap="round">
          <path d="M12.200 7v5M7 12.200h5" stroke="#36c5f0" />
          <path d="M17.800 7v5.200M22.800 12.200h.1" stroke="#2eb67d" />
          <path d="M18 17.800h5M17.800 22.800v.1" stroke="#ecb22e" />
          <path d="M12.200 18v5M7.200 17.800h.1" stroke="#e01e5a" />
        </g>
      </svg>
    ),
  },
  {
    name: "Skype",
    open: true,
    icon: (
      <svg width="30" height="30" viewBox="0 0 30 30">
        <circle cx="10" cy="10" r="9.500" fill="#0a9fe0" />
        <circle cx="20" cy="20" r="9.500" fill="#0087d0" />
        <circle cx="15" cy="15" r="12.800" fill="#0c97e0" />
        <path d="M19.500 10.500C18 8.300 11 7.500 11 11.500c0 4 8.500 2.500 8.500 6.700 0 4.300-7.500 4-9 .8" fill="none" stroke="white" strokeWidth="2.800" strokeLinecap="round" />
      </svg>
    ),
  },
  {
    name: "Illustrator",
    open: true,
    active: true,
    icon: (
      <span className="flex h-7 w-7 items-center justify-center rounded-md bg-[#330000] text-[15px] font-bold text-[#ff9a00]">
        Ai
      </span>
    ),
  },
  {
    name: "Impostazioni",
    open: true,
    icon: (
      <svg width="24" height="24" viewBox="0 0 24 24" fill="none" stroke="white">
        <circle cx="12" cy="12" r="6.500" strokeWidth="3" />
        <circle cx="12" cy="12" r="9.700" strokeWidth="3.500" strokeDasharray="3.800 3.820" />
      </svg>
    ),
  },
  {
    name: "Paint",
    open: true,
    icon: (
      <svg width="30" height="30" viewBox="0 0 30 30">
        <path d="M14 5C6 5 1 12 1 19c0 7 5 10 9 9 3-1 2-4 5-5 4-1 8-1 10-5 3-6-3-13-11-13z" fill="#a8d3ec" />
        <path d="M27 1l2 2-11 15-4 8-1-1 2-9z" fill="#d99a4a" />
        <path d="M25 0h3l2 3-3 4-4-3z" fill="#f1e2c8" />
        <circle cx="7" cy="14" r="2" fill="#3faf46" />
        <circle cx="12" cy="9.500" r="2" fill="#f2c230" />
        <circle cx="18" cy="9" r="2" fill="#e2562f" />
        <circle cx="6" cy="20" r="2" fill="#2f6fd0" />
      </svg>
    ),
  },
];

const Taskbar: React.FC = () => (
  <footer className="flex h-[50px] shrink-0 items-center bg-[#212121] text-white">
    <button aria-label="Start" className="flex w-[60px] justify-center">
      <svg width="20" height="20" viewBox="0 0 20 20">
        <path d="M0 3l8.500-1.200v7.700H0zM9.500 1.600L20 0v9.500H9.500zM0 10.500h8.500v7.700L0 17zM9.500 10.500H20V20L9.500 18.400z" fill="white" />
      </svg>
    </button>
    <div className="flex h-full w-[430px] items-center border border-[#5a5a5a] bg-[#333] pl-3.5">
      <svg width="20" height="20" viewBox="0 0 20 20" fill="none" stroke="white" strokeWidth="1.600" className="shrink-0">
        <circle cx="12" cy="7.500" r="6.500" />
        <path d="M7.500 12L1 19" />
      </svg>
      <input
        aria-label="Ricerca"
        placeholder="Scrivi qui per eseguire la ricerca"
        className="ml-[15px] w-full text-[18px] outline-none placeholder:text-[#d6d6d6]"
      />
    </div>
    <button aria-label="Visualizzazione attività" className="flex w-[63px] justify-center pr-1">
      <svg width="22" height="20" viewBox="0 0 22 20" fill="none" stroke="white" strokeWidth="1.300">
        <path d="M1 0v3.500h12V0M1 20v-3.500h12V20M1 6h12v8H1zM19 0v5M19 11v9" />
        <path d="M18 7h3v3h-3z" fill="white" />
      </svg>
    </button>
    {apps.map((app) => (
      <button
        key={app.name}
        aria-label={app.name}
        className={clsx(
          "relative flex h-full w-[62px] items-center justify-center",
          app.active && "bg-[#4a4a4a]"
        )}
      >
        {app.icon}
        {app.open && (
          <span
            className={clsx(
              "absolute bottom-0 h-[3px] bg-[#6a9dbb]",
              app.active ? "inset-x-0" : "inset-x-[5px]"
            )}
          />
        )}
      </button>
    ))}
    <div className="ml-auto flex items-center">
      <svg width="16" height="10" viewBox="0 0 16 10" fill="none"><path d="M1 9l7-7 7 7" stroke="white" strokeWidth="1.400" /></svg>
      <svg width="15" height="20" viewBox="0 0 15 20" fill="none" stroke="white" strokeWidth="1.300" className="ml-4">
        <path d="M1 5h9v10H1zM10 8.500l4-2v7l-4-2" />
        <circle cx="5.500" cy="10" r="2.200" />
        <path d="M3 2.500Q6 0 9 2.500M3 17.500q3 2.500 6 0" />
      </svg>
      <svg width="20" height="18" viewBox="0 0 20 18" fill="none" stroke="white" strokeWidth="1.300" className="ml-3.5">
        <path d="M5 5h13v9H5zM18.500 8v3" />
        <path d="M7 7h9v5H7zM1 3h5v5H1z" fill="white" />
      </svg>
      <svg width="18" height="18" viewBox="0 0 18 18" fill="none" stroke="#aaa" strokeWidth="1.400" className="ml-3">
        <path d="M2 17A15 15 0 0 1 16 2M6 17A11 11 0 0 1 16 7M10 17a6.500 6.500 0 0 1 6-6" />
        <circle cx="14.500" cy="15.500" r="1.500" fill="white" stroke="none" />
      </svg>
      <svg width="20" height="18" viewBox="0 0 20 18" fill="none" stroke="white" strokeWidth="1.300" className="ml-2">
        <path d="M1 6h3l5-4v14l-5-4H1z" />
        <path d="M12 6q1.500 3 0 6" />
        <path d="M14.500 4q3 5 0 10M17 2q4 7 0 14" stroke="#888" />
      </svg>
      <div className="ml-3 w-[78px] text-center text-[14px] leading-[23px]">
        <div>16:59</div>
        <div>29/10/2021</div>
      </div>
      <button aria-label="Notifiche" className="relative mr-[19px] ml-[22px]">
        <svg width="32" height="34" viewBox="0 0 32 34">
          <path d="M1 5h21v17h-9l-5 5v-5H1z" fill="white" />
          <path d="M4 9.500h15M4 13.500h15M4 17.500h10" stroke="#222" strokeWidth="1.300" />
          <circle cx="20" cy="24" r="9" fill="#4a4a4a" stroke="#8a8a8a" />
        </svg>
        <span className="absolute top-[15px] left-[11px] w-[18px] text-center text-[12px] leading-[18px]">6</span>
      </button>
    </div>
  </footer>
);

const App: React.FC = () => {
  return (
    <div className="flex h-screen flex-col overflow-hidden bg-[#535353] [font-family:'Open_Sans','Noto_Sans',sans-serif]">
      <MenuBar />
      <ControlBar />
      <div className="flex min-h-0 flex-1">
        <Toolbar />
        <Workspace />
        <Dock groups={dockGroups} />
        <Dock groups={[sideDock]} />
      </div>
      <Taskbar />
    </div>
  );
};

export default App;
